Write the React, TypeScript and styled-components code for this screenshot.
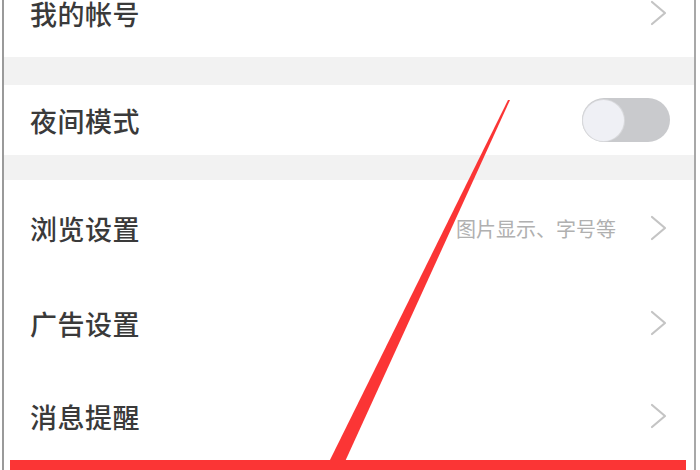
import styled, { createGlobalStyle } from "styled-components";

const GlobalStyle = createGlobalStyle`
    html, body {
        margin: 0;
        padding: 0;
        background: #ffffff;
    }
    body {
        font-family: "Noto Sans CJK SC", "Noto Sans", sans-serif;
    }
`

type Item = {
    title: string
    hint?: string
    height: number
}

const GROUPS: Item[][] = [
    [{ title: '我的帐号', height: 88 }],
    [{ title: '夜间模式', height: 70 }],
    [
        { title: '浏览设置', hint: '图片显示、字号等', height: 96 },
        { title: '广告设置', height: 94 },
        { title: '消息提醒', height: 92 },
    ],
]

const BAND_HEIGHTS = [28, 25]

function Chevron() {
    return (
        <svg width="17" height="26" viewBox="0 0 17 26">
            <polyline
                points="2,2 15,13 2,24"
                fill="none"
                stroke="#c4c4c4"
                strokeWidth="2.2"
                strokeLinecap="round"
                strokeLinejoin="round"
            />
        </svg>
    )
}

function App() {
    return (
        <Screen>
            <GlobalStyle />
            <Phone>
                <List>
                    {GROUPS.map((group, gi) => (
                        <div key={gi}>
                            {gi > 0 && <Band $h={BAND_HEIGHTS[gi - 1]} />}
                            {group.map((item) => (
                                <Row key={item.title} $h={item.height}>
                                    <Title>{item.title}</Title>
                                    {item.title === '夜间模式' ? (
                                        <Toggle>
                                            <Knob />
                                        </Toggle>
                                    ) : (
                                        <Trail>
                                            {item.hint && <Hint>{item.hint}</Hint>}
                                            <Chevron />
                                        </Trail>
                                    )}
                                </Row>
                            ))}
                        </div>
                    ))}
                </List>
            </Phone>
            <Annotation width="700" height="470" viewBox="0 0 700 470">
                <polygon points="508,100 510,100 343,466 327,466" fill="#fb3535" />
                <rect x="10" y="460" width="676" height="14" fill="#fb3535" />
            </Annotation>
        </Screen>
    );
}

const Screen = styled.div`
    position: relative;
    width: 700px;
    height: 470px;
    overflow: hidden;
    background: #ffffff;
`

const Phone = styled.div`
    margin-left: 2px;
    width: 690px;
    height: 470px;
    border-left: 2px solid #9a9a9a;
    border-right: 2px solid #a8a8a8;
    overflow: hidden;
`

const List = styled.div`
    margin-top: -31px;
`

const Band = styled.div<{ $h: number }>`
    height: ${(p) => p.$h}px;
    background: #f2f2f2;
`

const Row = styled.div<{ $h: number }>`
    height: ${(p) => p.$h}px;
    display: flex;
    align-items: center;
    justify-content: space-between;
    padding: 0 27px 0 26px;
    background: #ffffff;
`

const Title = styled.span`
    font-size: 27px;
    font-weight: 500;
    color: #3a3a3a;
    letter-spacing: 0.5px;
`

const Trail = styled.div`
    display: flex;
    align-items: center;
    gap: 34px;
`

const Hint = styled.span`
    font-size: 20px;
    color: #b0b0b0;
`

const Toggle = styled.div`
    width: 88px;
    height: 44px;
    border-radius: 22px;
    background: #c9cacd;
    display: flex;
    align-items: center;
    padding: 0 1px;
    box-sizing: border-box;
    margin-right: -3px;
`

const Knob = styled.div`
    width: 41px;
    height: 41px;
    border-radius: 50%;
    background: #eff0f5;
    box-shadow: 0 0 0 1px #d8d9dc;
`

const Annotation = styled.svg`
    position: absolute;
    left: 0;
    top: 0;
    pointer-events: none;
`

export default App;
